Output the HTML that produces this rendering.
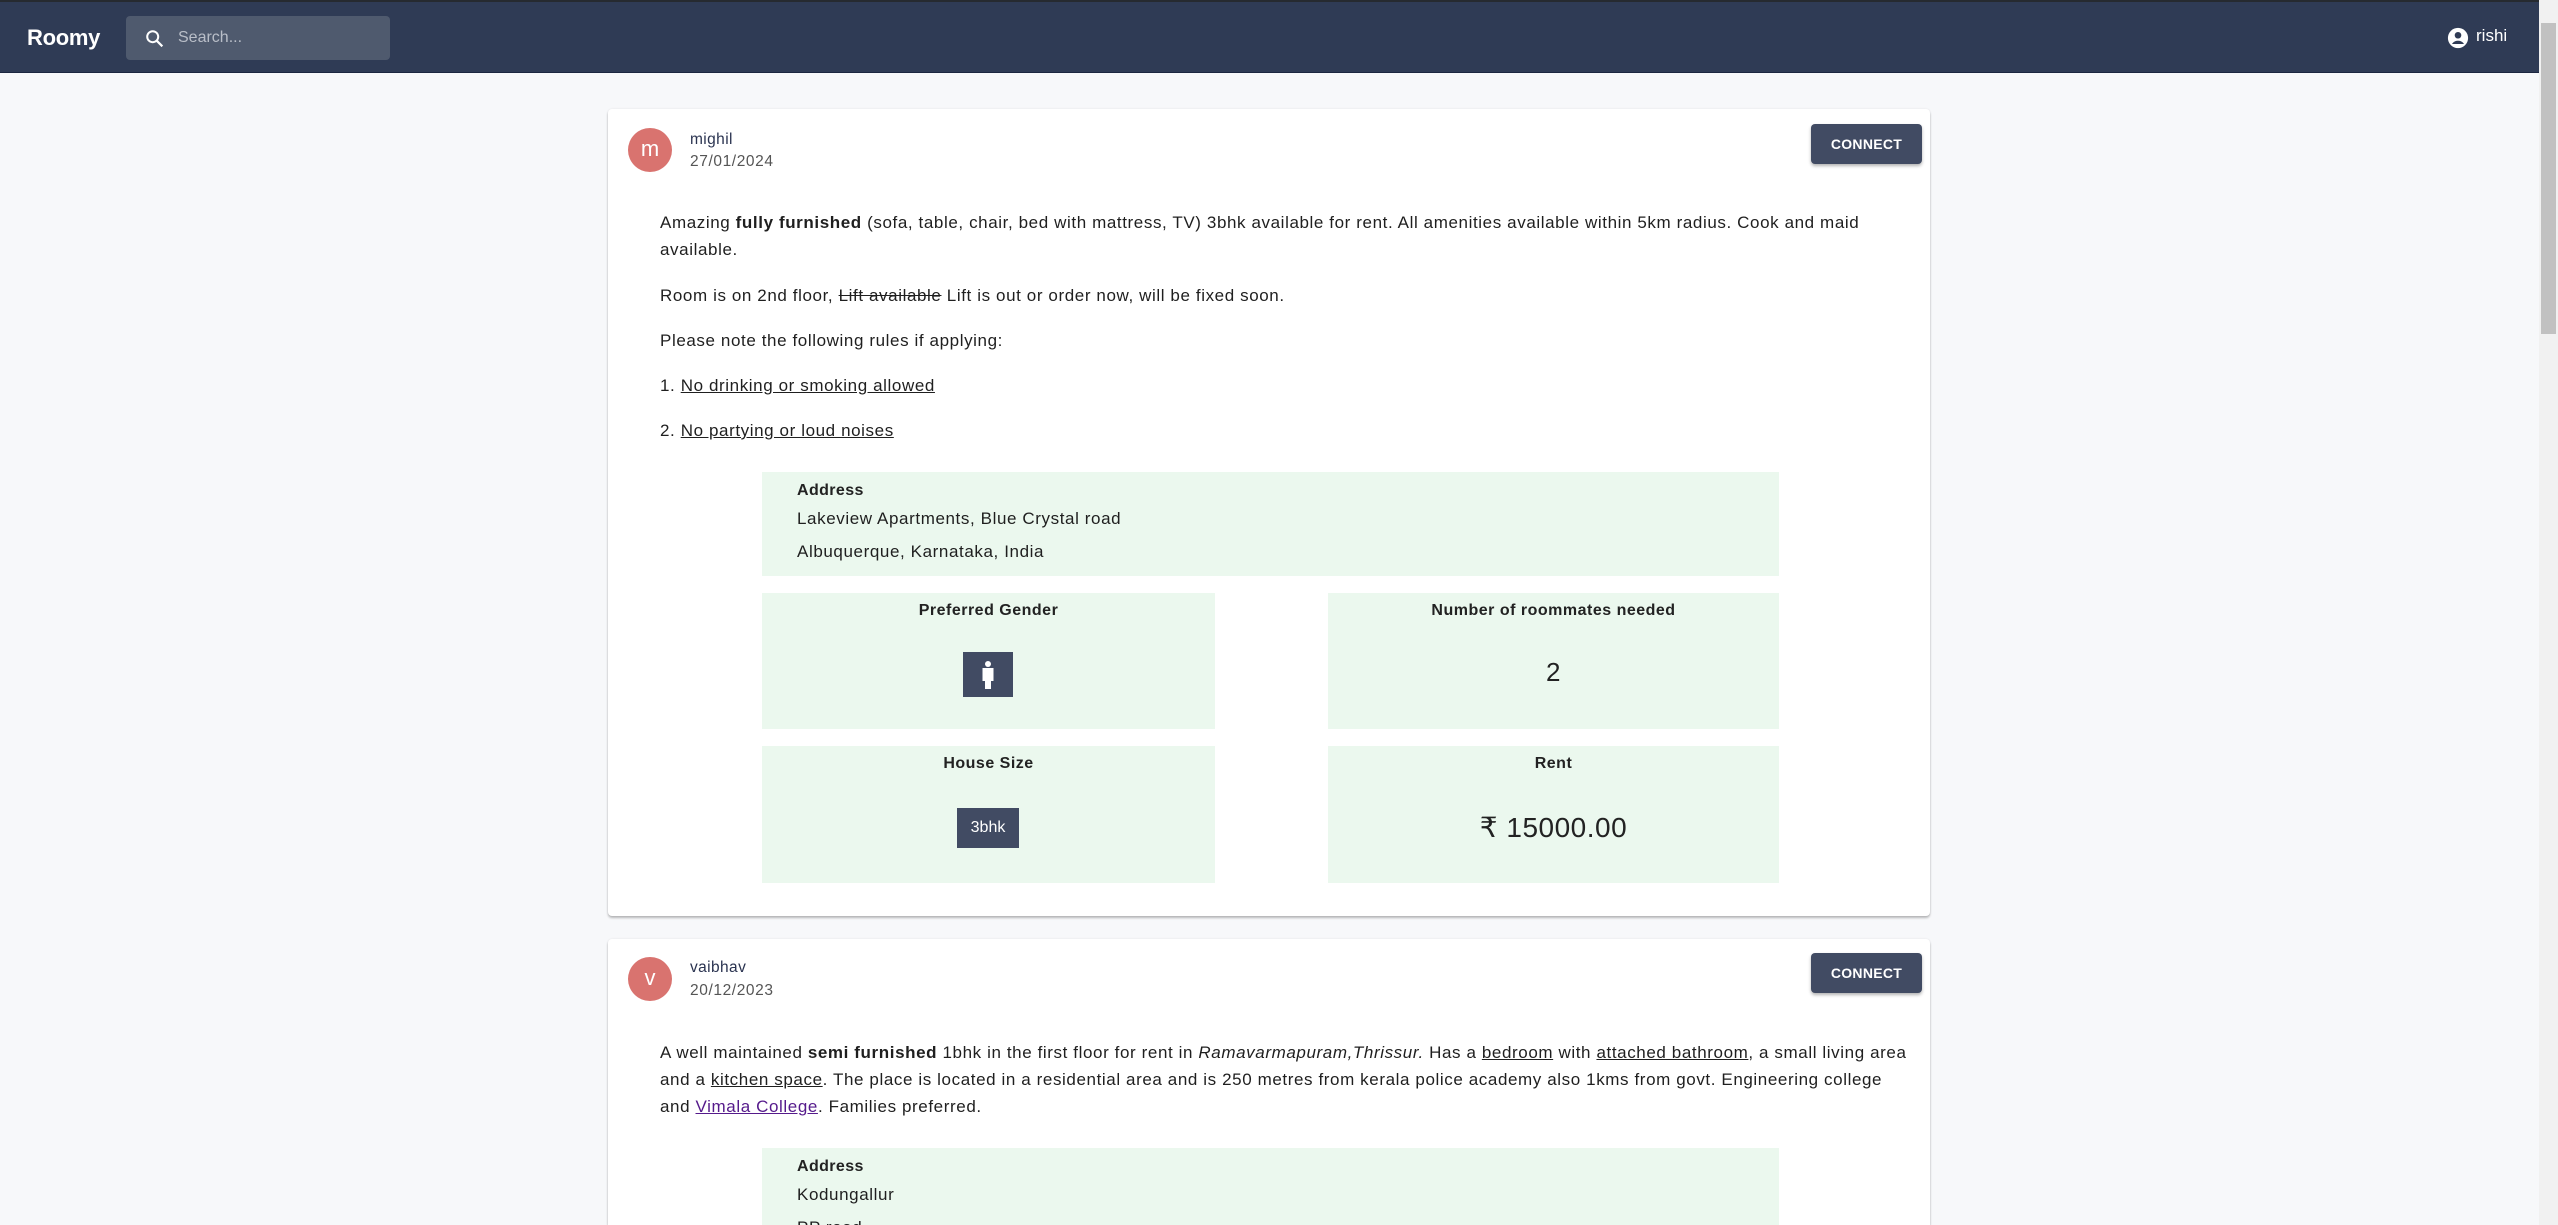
<!DOCTYPE html>
<html><head><meta charset="utf-8">
<style>
*{box-sizing:border-box;margin:0;padding:0}
html,body{width:2558px;height:1225px;overflow:hidden;background:#f7f8fa;font-family:"Liberation Sans",sans-serif;color:#1f1f1f}
#w{position:relative;width:2558px;height:1225px;overflow:hidden}
.topline{position:absolute;left:0;top:0;width:2539px;height:2px;background:#262a30}
.nav{position:absolute;left:0;top:2px;width:2539px;height:71px;background:#2f3b55;border-bottom:1px solid #1c2640}
.logo{position:absolute;left:27px;top:23px;color:#fff;font-weight:bold;font-size:22px;letter-spacing:-0.3px}
.search{position:absolute;left:126px;top:14px;width:264px;height:44px;background:#4f5a6e;border-radius:4px}
.search span{position:absolute;left:52px;top:13px;color:#b9bec8;font-size:16px}
.user{position:absolute;left:2447px;top:24px;color:#fff;font-size:17px}
.sb{position:absolute;left:2539px;top:0;width:19px;height:1225px;background:#f1f1f1}
.thumb{position:absolute;left:2541px;top:23px;width:15px;height:311px;background:#c1c1c1}
.card{position:absolute;left:608px;width:1322px;background:#fff;border-radius:4px;box-shadow:0 2px 2px rgba(0,0,0,.25),0 0 2px rgba(0,0,0,.08);overflow:hidden}
.av{position:absolute;left:20px;width:44px;height:44px;border-radius:50%;background:#d9736f;color:#fff;font-size:22px;text-align:center;line-height:42px}
.nm{position:absolute;left:82px;font-size:15.5px;color:#2a3350;letter-spacing:0.4px}
.dt{position:absolute;left:82px;font-size:15.5px;color:#555;letter-spacing:0.6px}
.btn{position:absolute;left:1203px;width:111px;height:40px;background:#414b63;color:#fff;font-weight:bold;font-size:14px;text-align:center;line-height:40px;border-radius:4px;box-shadow:0 2px 3px rgba(0,0,0,.3);letter-spacing:.3px}
.p{position:absolute;left:52px;font-size:17px;line-height:27px;white-space:nowrap;letter-spacing:0.6px}
.g{position:absolute;background:#ebf8ee;overflow:hidden}
.t{position:absolute;width:100%;text-align:center;font-size:16px;font-weight:bold;color:#222;letter-spacing:0.5px}
.a{position:absolute;left:35px;font-size:17px;letter-spacing:0.6px}
u{text-decoration:underline}
</style></head><body><div id="w">
<div class="topline"></div>
<div class="nav">
<div class="logo">Roomy</div>
<div class="search"><svg style="position:absolute;left:18px;top:12px" width="22" height="22" viewBox="0 0 24 24"><circle cx="9.5" cy="9.5" r="6" fill="none" stroke="#fff" stroke-width="2.2"/><path d="M14 14l6 6" stroke="#fff" stroke-width="2.4"/></svg><span>Search...</span></div>
<div class="user"><svg style="position:absolute;left:0;top:1px" width="22" height="22" viewBox="0 0 24 24"><circle cx="12" cy="12" r="11" fill="#fff"/><circle cx="12" cy="9" r="3.6" fill="#2f3b55"/><path d="M5.5 18.5c1.5-2.5 4-3.5 6.5-3.5s5 1 6.5 3.5" fill="#2f3b55"/></svg><span style="position:absolute;left:29px;top:0">rishi</span></div>
</div>
<div class="sb"></div><div class="thumb"></div>

<div class="card" style="top:109px;height:807px">
<div class="av" style="top:19px">m</div>
<div class="nm" style="top:22px">mighil</div>
<div class="dt" style="top:44px">27/01/2024</div>
<div class="btn" style="top:15px">CONNECT</div>
<div class="p" style="top:100px">Amazing <b>fully furnished</b> (sofa, table, chair, bed with mattress, TV) 3bhk available for rent. All amenities available within 5km radius. Cook and maid<br>available.</div>
<div class="p" style="top:173px">Room is on 2nd floor, <s>Lift available</s> Lift is out or order now, will be fixed soon.</div>
<div class="p" style="top:218px">Please note the following rules if applying:</div>
<div class="p" style="top:263px">1. <u>No drinking or smoking allowed</u></div>
<div class="p" style="top:308px">2. <u>No partying or loud noises</u></div>
<div class="g" style="left:154px;top:363px;width:1017px;height:104px">
<div class="a" style="top:10px;font-weight:bold;color:#222;font-size:16px;letter-spacing:0.4px">Address</div>
<div class="a" style="top:37px">Lakeview Apartments, Blue Crystal road</div>
<div class="a" style="top:70px">Albuquerque, Karnataka, India</div>
</div>
<div class="g" style="left:154px;top:484px;width:453px;height:136px">
<div class="t" style="top:9px">Preferred Gender</div>
<div style="position:absolute;left:201px;top:59px;width:50px;height:45px;background:#414b63">
<svg width="50" height="45" viewBox="0 0 50 45"><circle cx="25" cy="12" r="3" fill="#fff"/><path d="M19.5 16h11v13h-2.5v8h-6v-8h-2.5z" fill="#fff"/></svg></div>
</div>
<div class="g" style="left:720px;top:484px;width:451px;height:136px">
<div class="t" style="top:9px">Number of roommates needed</div>
<div class="t" style="top:64px;font-size:26px;font-weight:normal">2</div>
</div>
<div class="g" style="left:154px;top:637px;width:453px;height:137px">
<div class="t" style="top:9px">House Size</div>
<div style="position:absolute;left:195px;top:62px;width:62px;height:40px;background:#414b63;color:#fff;font-size:16px;text-align:center;line-height:40px">3bhk</div>
</div>
<div class="g" style="left:720px;top:637px;width:451px;height:137px">
<div class="t" style="top:65px;font-size:28px;font-weight:normal">₹ 15000.00</div>
<div class="t" style="top:9px">Rent</div>
</div>
</div>

<div class="card" style="top:939px;height:286px;border-radius:4px 4px 0 0">
<div class="av" style="top:18px">v</div>
<div class="nm" style="top:20px">vaibhav</div>
<div class="dt" style="top:43px">20/12/2023</div>
<div class="btn" style="top:14px">CONNECT</div>
<div class="p" style="top:100px">A well maintained <b>semi furnished</b> 1bhk in the first floor for rent in <i>Ramavarmapuram,Thrissur.</i> Has a <u>bedroom</u> with <u>attached bathroom</u>, a small living area<br>and a <u>kitchen space</u>. The place is located in a residential area and is 250 metres from kerala police academy also 1kms from govt. Engineering college<br>and <u style="color:#551a8b">Vimala College</u>. Families preferred.</div>
<div class="g" style="left:154px;top:209px;width:1017px;height:77px">
<div class="a" style="top:10px;font-weight:bold;color:#222;font-size:16px;letter-spacing:0.4px">Address</div>
<div class="a" style="top:37px">Kodungallur</div>
<div class="a" style="top:70px">PP road</div>
</div>
</div>
</div></body></html>
